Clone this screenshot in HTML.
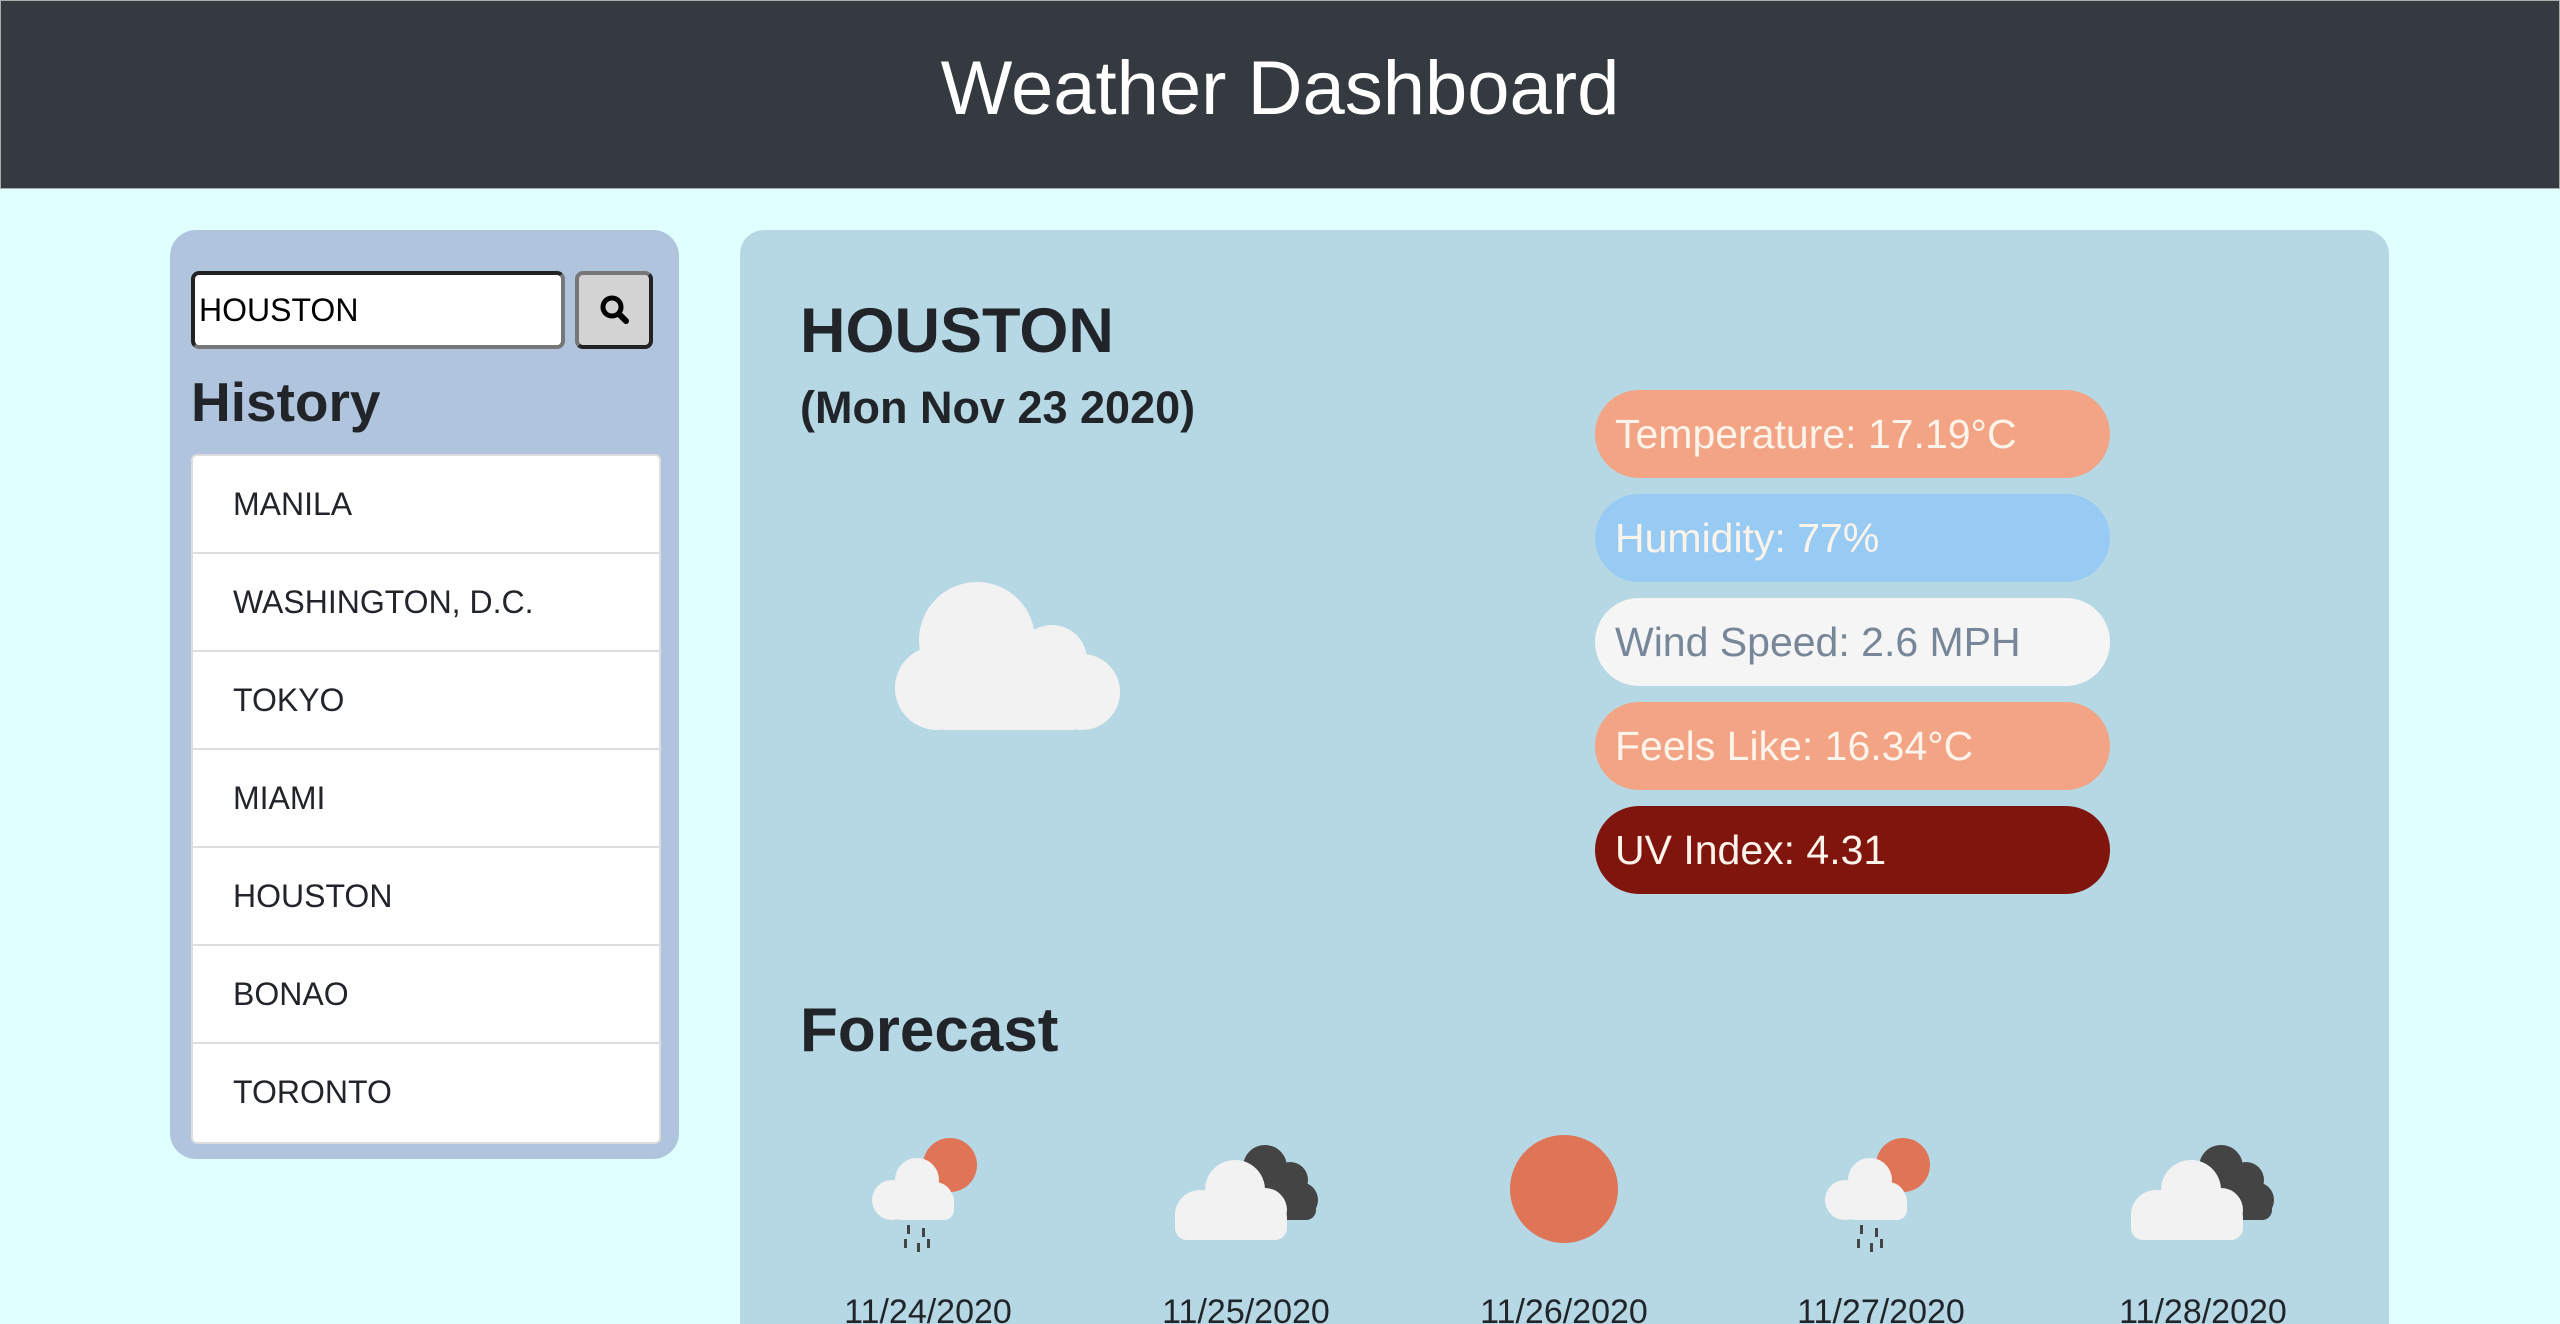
<!DOCTYPE html>
<html style="overflow:hidden;height:1324px"><head><meta charset="utf-8"><style>
*{box-sizing:border-box;margin:0;padding:0}
body{width:2560px;height:1324px;overflow:hidden;background:#e0ffff;font-family:"Liberation Sans",sans-serif;color:#212529;position:relative}
.hdr{position:absolute;left:0;top:0;width:2560px;height:189px;background:#343a40;color:#fff;text-align:center;font-size:76px;line-height:176px;border:1px solid #aaa}
.side{position:absolute;left:170px;top:230px;width:509px;height:929px;background:#b0c4de;border-radius:26px}
.inp{position:absolute;left:21px;top:41px;width:374px;height:78px;background:#fff;border:4px solid #222;border-right-color:#777;border-bottom-color:#777;border-radius:8px;font-size:32px;line-height:70px;padding-left:4px;color:#000}
.btn{position:absolute;left:405px;top:41px;width:78px;height:78px;background:#d3d3d3;border:4px solid #777;border-right-color:#222;border-bottom-color:#222;border-radius:8px}
.hist{position:absolute;left:21px;top:140px;font-size:55px;font-weight:bold;color:#212529}
.list{position:absolute;left:21px;top:224px;width:470px;height:690px;background:#fff;border:2px solid #ddd;border-radius:6px}
.list div{height:98px;border-bottom:2px solid #ddd;font-size:32px;line-height:96px;padding-left:40px}
.list div:last-child{border-bottom:none}
.main{position:absolute;left:740px;top:230px;width:1649px;height:1094px;background:#b6d8e4;border-radius:24px 24px 0 0;overflow:hidden}
.city{position:absolute;left:60px;top:65px;font-size:63px;font-weight:bold}
.date{position:absolute;left:60px;top:152px;font-size:45px;font-weight:bold}
.pill{position:absolute;left:855px;width:515px;height:88px;border-radius:44px;font-size:41px;line-height:88px;padding-left:20px;color:#fcf3ea}
.fc{position:absolute;left:60px;top:765px;font-size:62px;font-weight:bold}
.d{position:absolute;top:1063px;font-size:34px;width:200px;text-align:center;margin-left:-100px}
</style></head><body>
<div class="hdr">Weather Dashboard</div>
<div class="side">
<div class="inp">HOUSTON</div>
<div class="btn"><svg width="70" height="70" viewBox="0 0 70 70"><circle cx="33" cy="32" r="9" fill="none" stroke="#000" stroke-width="5"/><line x1="40" y1="39" x2="47" y2="46" stroke="#000" stroke-width="6" stroke-linecap="round"/></svg></div>
<div class="hist">History</div>
<div class="list"><div>MANILA</div><div>WASHINGTON, D.C.</div><div>TOKYO</div><div>MIAMI</div><div>HOUSTON</div><div>BONAO</div><div>TORONTO</div></div>
</div>
<div class="main">
<div class="city">HOUSTON</div>
<div class="date">(Mon Nov 23 2020)</div>
<svg style="position:absolute;left:142px;top:350px" width="240" height="152" viewBox="0 0 240 152"><g fill="#f2f2f2"><circle cx="95" cy="60" r="58"/><circle cx="170" cy="80" r="35"/><circle cx="55" cy="108" r="42"/><circle cx="200" cy="112" r="38"/><rect x="55" y="90" width="145" height="60" rx="10"/></g></svg>
<div class="pill" style="top:160px;background:#f3a484">Temperature: 17.19°C</div>
<div class="pill" style="top:264px;background:#97cbf3">Humidity: 77%</div>
<div class="pill" style="top:368px;background:#f5f5f5;color:#778699">Wind Speed: 2.6 MPH</div>
<div class="pill" style="top:472px;background:#f3a484">Feels Like: 16.34°C</div>
<div class="pill" style="top:576px;background:#80150e">UV Index: 4.31</div>
<div class="fc">Forecast</div>
<svg style="position:absolute;left:127px;top:905px" width="120" height="120" viewBox="0 0 120 120"><circle cx="83" cy="30" r="27" fill="#e07456"/><g fill="#f2f2f2"><circle cx="50" cy="45" r="22"/><circle cx="25" cy="65" r="20"/><circle cx="68" cy="65" r="18"/><rect x="25" y="55" width="62" height="30" rx="10"/></g><g fill="#444"><rect x="40" y="90" width="3" height="9"/><rect x="55" y="93" width="3" height="9"/><rect x="37" y="104" width="3" height="9"/><rect x="50" y="108" width="3" height="9"/><rect x="60" y="104" width="3" height="9"/></g></svg>
<svg style="position:absolute;left:430px;top:905px" width="160" height="110" viewBox="0 0 160 110"><g fill="#444"><circle cx="95" cy="32" r="22"/><circle cx="120" cy="45" r="18"/><circle cx="130" cy="65" r="18"/><rect x="90" y="50" width="56" height="35" rx="10"/></g><g fill="#f2f2f2"><circle cx="65" cy="55" r="30"/><circle cx="30" cy="80" r="25"/><circle cx="95" cy="75" r="22"/><rect x="5" y="70" width="112" height="35" rx="12"/></g></svg>
<svg style="position:absolute;left:769px;top:905px" width="110" height="110" viewBox="0 0 110 110"><ellipse cx="55" cy="54" rx="54" ry="54" fill="#e07456"/></svg>
<svg style="position:absolute;left:1080px;top:905px" width="120" height="120" viewBox="0 0 120 120"><circle cx="83" cy="30" r="27" fill="#e07456"/><g fill="#f2f2f2"><circle cx="50" cy="45" r="22"/><circle cx="25" cy="65" r="20"/><circle cx="68" cy="65" r="18"/><rect x="25" y="55" width="62" height="30" rx="10"/></g><g fill="#444"><rect x="40" y="90" width="3" height="9"/><rect x="55" y="93" width="3" height="9"/><rect x="37" y="104" width="3" height="9"/><rect x="50" y="108" width="3" height="9"/><rect x="60" y="104" width="3" height="9"/></g></svg>
<svg style="position:absolute;left:1386px;top:905px" width="160" height="110" viewBox="0 0 160 110"><g fill="#444"><circle cx="95" cy="32" r="22"/><circle cx="120" cy="45" r="18"/><circle cx="130" cy="65" r="18"/><rect x="90" y="50" width="56" height="35" rx="10"/></g><g fill="#f2f2f2"><circle cx="65" cy="55" r="30"/><circle cx="30" cy="80" r="25"/><circle cx="95" cy="75" r="22"/><rect x="5" y="70" width="112" height="35" rx="12"/></g></svg>
<div class="d" style="left:188px">11/24/2020</div>
<div class="d" style="left:506px">11/25/2020</div>
<div class="d" style="left:824px">11/26/2020</div>
<div class="d" style="left:1141px">11/27/2020</div>
<div class="d" style="left:1463px">11/28/2020</div>
</div>
</body></html>
